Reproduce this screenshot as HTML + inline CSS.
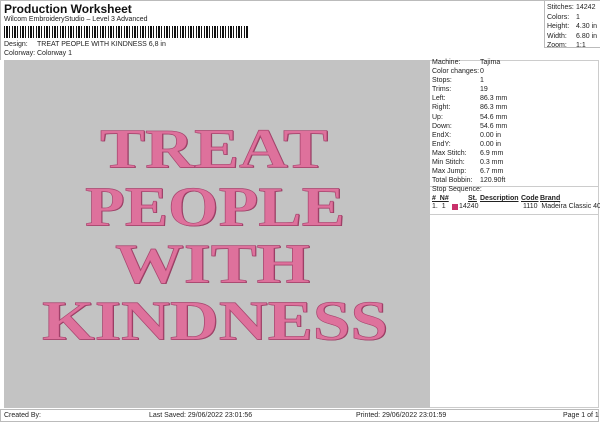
<!DOCTYPE html>
<html><head><style>
body{margin:0;width:600px;height:424px;background:#fff;font-family:"Liberation Sans",sans-serif;font-size:7px;color:#222;position:relative;overflow:hidden}
.a{position:absolute;white-space:nowrap}
.ln{position:absolute;left:0;font-family:"Liberation Serif",serif;font-weight:bold;font-size:70px;line-height:70px;height:70px;color:#de719c;font-variant-ligatures:none;font-feature-settings:"liga" 0;-webkit-text-stroke:0.8px #a84770;text-shadow:1px 1px 0 #93385d;white-space:nowrap;transform-origin:left top}
</style></head><body>
<div class="a" style="left:0;top:0;width:599px;height:59px;border:1px solid #bbb;border-bottom:none"></div>
<div class="a" style="left:4px;top:2px;font-size:12px;font-weight:bold;color:#111">Production Worksheet</div>
<div class="a" style="left:4px;top:16px">Wilcom EmbroideryStudio – Level 3 Advanced</div>
<div class="a" style="left:4px;top:26px;width:245px;height:12px;background:repeating-linear-gradient(90deg,#111 0 1px,#fff 1px 2px,#111 2px 4px,#fff 4px 5px,#111 5px 6px,#fff 6px 8px)"></div>
<div class="a" style="left:4px;top:41px">Design:</div><div class="a" style="left:37px;top:41px">TREAT PEOPLE WITH KINDNESS 6,8 in</div>
<div class="a" style="left:4px;top:50px">Colorway:</div><div class="a" style="left:37px;top:50px">Colorway 1</div>
<div class="a" style="left:544px;top:0;width:55px;height:47px;border-left:1px solid #bbb;border-bottom:1px solid #bbb"></div>
<div class="a" style="left:547px;top:3px;line-height:9.5px">Stitches:<br>Colors:<br>Height:<br>Width:<br>Zoom:</div>
<div class="a" style="left:576px;top:3px;line-height:9.5px">14242<br>1<br>4.30 in<br>6.80 in<br>1:1</div>
<div class="a" style="left:4px;top:60px;width:426px;height:348px;background:#c3c3c3"></div>
<div class="a" style="left:430px;top:60px;width:169px;height:348px;border:1px solid #ccc;border-left:none;box-sizing:border-box"></div>
<div class="a" style="left:432px;top:58px;line-height:9.1px">Machine:<br>Color changes:<br>Stops:<br>Trims:<br>Left:<br>Right:<br>Up:<br>Down:<br>EndX:<br>EndY:<br>Max Stitch:<br>Min Stitch:<br>Max Jump:<br>Total Bobbin:</div>
<div class="a" style="left:480px;top:58px;line-height:9.1px">Tajima<br>0<br>1<br>19<br>86.3 mm<br>86.3 mm<br>54.6 mm<br>54.6 mm<br>0.00 in<br>0.00 in<br>6.9 mm<br>0.3 mm<br>6.7 mm<br>120.90ft</div>
<div class="a" style="left:430px;top:186px;width:169px;border-top:1px solid #ccc"></div>
<div class="a" style="left:432px;top:186px">Stop Sequence:</div>
<div class="a" style="left:432px;top:195px;font-weight:bold;text-decoration:underline">#&nbsp; N#</div>
<div class="a" style="left:468px;top:195px;font-weight:bold;text-decoration:underline">St.</div>
<div class="a" style="left:480px;top:195px;font-weight:bold;text-decoration:underline">Description</div>
<div class="a" style="left:521px;top:195px;font-weight:bold;text-decoration:underline">Code</div>
<div class="a" style="left:540px;top:195px;font-weight:bold;text-decoration:underline">Brand</div>
<div class="a" style="left:432px;top:203px">1.&nbsp; 1</div>
<div class="a" style="left:452px;top:204px;width:6px;height:6px;background:#c8306a"></div>
<div class="a" style="left:459px;top:203px">14240</div>
<div class="a" style="left:523px;top:203px">1110&nbsp; Madeira Classic 40</div>
<div class="a" style="left:430px;top:214px;width:169px;border-top:1px solid #ccc"></div>
<div class="ln" data-x="100" data-w="228" data-y="125">TREAT</div>
<div class="ln" data-x="85" data-w="260" data-y="183">PEOPLE</div>
<div class="ln" data-x="115" data-w="195" data-y="240">WITH</div>
<div class="ln" data-x="42" data-w="346" data-y="297">KINDNESS</div>
<div class="a" style="left:0;top:409px;width:599px;height:13px;border:1px solid #bbb;box-sizing:border-box"></div>
<div class="a" style="left:4px;top:412px">Created By:</div>
<div class="a" style="left:149px;top:412px">Last Saved: 29/06/2022 23:01:56</div>
<div class="a" style="left:356px;top:412px">Printed: 29/06/2022 23:01:59</div>
<div class="a" style="left:563px;top:412px">Page 1 of 1</div>
<script>
document.querySelectorAll('.ln').forEach(function(s){
  var w=s.getBoundingClientRect().width;
  var sx=(+s.dataset.w)/w;
  var sy=0.797;
  s.style.left=s.dataset.x+'px';
  s.style.top=((+s.dataset.y)-4*sy)+'px';
  s.style.transform='scale('+sx+','+sy+')';
});
</script>
</body></html>
